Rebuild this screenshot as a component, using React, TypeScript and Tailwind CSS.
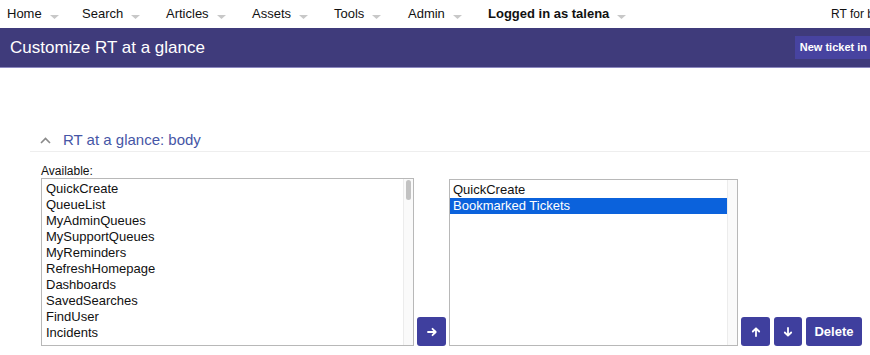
const navItems = [
    { label: "Home", w: "w-[75px]" },
    { label: "Search", w: "w-[84px]" },
    { label: "Articles", w: "w-[86px]" },
    { label: "Assets", w: "w-[82px]" },
    { label: "Tools", w: "w-[74px]" },
    { label: "Admin", w: "w-[80px]" },
]

const available = [
    "QuickCreate",
    "QueueList",
    "MyAdminQueues",
    "MySupportQueues",
    "MyReminders",
    "RefreshHomepage",
    "Dashboards",
    "SavedSearches",
    "FindUser",
    "Incidents",
]

const Caret = () => (
    <svg width="9" height="5" viewBox="0 0 9 5" className="ml-2 mt-[6px]">
        <path d="M0 0 L9 0 L4.5 4 Z" fill="#c8c8c8" />
    </svg>
)

const Btn = ({ children, className = "" }: { children: React.ReactNode; className?: string }) => (
    <button className={`h-[29px] rounded-[3px] bg-[#3f3f9e] text-white text-[13px] font-bold flex items-center justify-center ${className}`}>
        {children}
    </button>
)

// small bold arrow, drawn pointing right and rotated
const Arrow = ({ rot = "" }: { rot?: string }) => (
    <svg width="10" height="10" viewBox="0 0 10 10" className={rot}>
        <path d="M1 5 H8.5 M5.5 1.8 L8.7 5 L5.5 8.2" fill="none" stroke="white" strokeWidth="1.8" strokeLinecap="round" strokeLinejoin="round" />
    </svg>
)

export default function App() {
    return <div className="w-[870px] h-[355px] overflow-hidden bg-white text-[#111] font-['Liberation_Sans',Arial,sans-serif]">
        {/* top menu */}
        <div className="h-[28px] flex items-center text-[13px] pl-[7px]">
            {navItems.map((n) => (
                <div key={n.label} className={`flex items-center ${n.w}`}>
                    <span>{n.label}</span>
                    <Caret />
                </div>
            ))}
            <div className="flex items-center font-bold">
                <span>Logged in as talena</span>
                <Caret />
            </div>
            <span className="ml-auto mr-[-4px] text-[12px] whitespace-nowrap">RT for b</span>
        </div>

        {/* page header */}
        <div className="h-[40px] bg-[#3f3b7b] border-b border-[#8c88c0] flex items-center pl-[10px]">
            <h1 className="text-white text-[17px] leading-none">Customize RT at a glance</h1>
            <div className="ml-auto bg-[#4743a0] text-white text-[11px] font-bold h-[23px] pl-[5px] pr-[3px] flex items-center whitespace-nowrap">New ticket in</div>
        </div>

        {/* section */}
        <div className="pl-[30px] pt-[62px]">
            <div className="flex items-center h-[22px] pl-[10px] border-b border-[#eeeeee]">
                <svg width="11" height="7" viewBox="0 0 11 7" className="mr-[12px]">
                    <path d="M1 6 L5.5 1.5 L10 6" fill="none" stroke="#8a8a8a" strokeWidth="1.6" />
                </svg>
                <span className="text-[15px] text-[#4656a6]">RT at a glance: body</span>
            </div>

            <div className="pl-[11px] pt-[12px]">
                <div className="text-[12px] leading-[14px]">Available:</div>
                <div className="flex items-end">
                    <div className="w-[373px] h-[168px] border border-[#b8b8b8] flex bg-white">
                        <ul className="flex-1 pl-[4px] pt-[2px] text-[13px] leading-[16px]">
                            {available.map((a) => <li key={a}>{a}</li>)}
                        </ul>
                        <div className="w-[10px] border-l border-[#ececec] bg-[#fafafa] pt-[1px] flex justify-center">
                            <div className="w-[5px] h-[20px] rounded-full bg-[#c2c2c2]" />
                        </div>
                    </div>
                    <Btn className="w-[29px] ml-[3px]"><Arrow /></Btn>
                    <div className="w-[289px] h-[167px] ml-[3px] border border-[#b8b8b8] flex bg-white">
                        <ul className="flex-1 pt-[2px] text-[13px] leading-[16px]">
                            <li className="pl-[3px]">QuickCreate</li>
                            <li className="pl-[3px] bg-[#0b62dc] text-white">Bookmarked Tickets</li>
                        </ul>
                        <div className="w-[10px] border-l border-[#ececec] bg-[#fafafa]" />
                    </div>
                    <Btn className="w-[29px] ml-[3px]"><Arrow rot="-rotate-90" /></Btn>
                    <Btn className="w-[28px] ml-[4px]"><Arrow rot="rotate-90" /></Btn>
                    <Btn className="w-[56px] ml-[4px]">Delete</Btn>
                </div>
            </div>
        </div>
    </div>
}
